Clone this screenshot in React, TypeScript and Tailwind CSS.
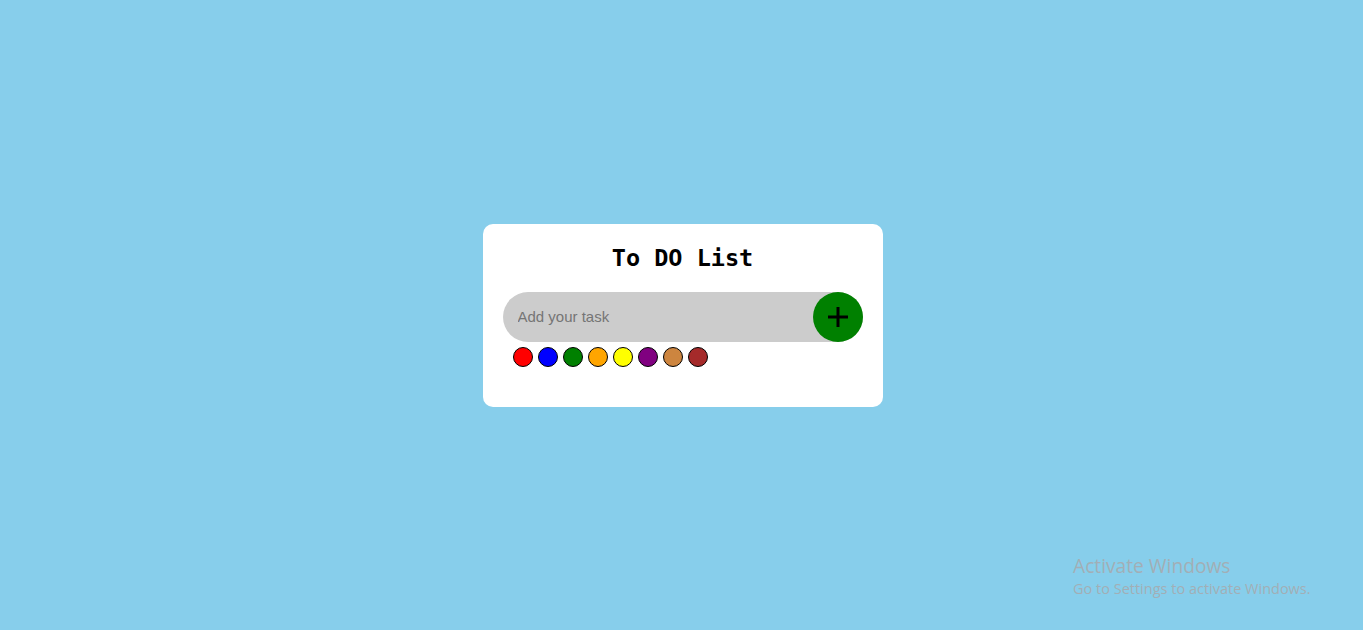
const colors = ["red", "blue", "green", "orange", "yellow", "purple", "peru", "brown"];

export default function App() {
  return (
    <div className="relative flex h-screen w-full items-center justify-center bg-[#87ceeb]">
      <div className="ml-[2px] flex w-[400px] flex-col rounded-[10px] bg-white px-5 pt-[19px] pb-10">
        <h2 className="mb-[19px] text-center font-['DejaVu_Sans_Mono',monospace] text-[23.5px] leading-[30px] font-bold text-black">
          To DO List
        </h2>
        <div className="flex h-[50px] items-center rounded-full bg-[#cccccc]">
          <input
            className="h-full flex-1 bg-transparent pl-[15px] font-['Liberation_Sans',Arial,sans-serif] text-[15px] outline-none placeholder:text-[#757575]"
            placeholder="Add your task"
          />
          <button className="flex h-[50px] w-[50px] items-center justify-center rounded-full bg-[#008000]">
            <svg width="22" height="22" viewBox="0 0 22 22">
              <path d="M11 1v20M1 11h20" stroke="black" strokeWidth="3" />
            </svg>
          </button>
        </div>
        <div className="mt-[5px] flex gap-[5px] pl-[10px]">
          {colors.map((c) => (
            <span
              key={c}
              className="h-5 w-5 rounded-full border border-black"
              style={{ backgroundColor: c }}
            />
          ))}
        </div>
      </div>
      <div className="absolute top-[554px] left-[1073px] font-['Open_Sans',sans-serif] text-[#a2aeb6]">
        <div className="text-[19.2px] leading-[24px]">Activate Windows</div>
        <div className="text-[14.5px] leading-[21px]">Go to Settings to activate Windows.</div>
      </div>
    </div>
  );
}
